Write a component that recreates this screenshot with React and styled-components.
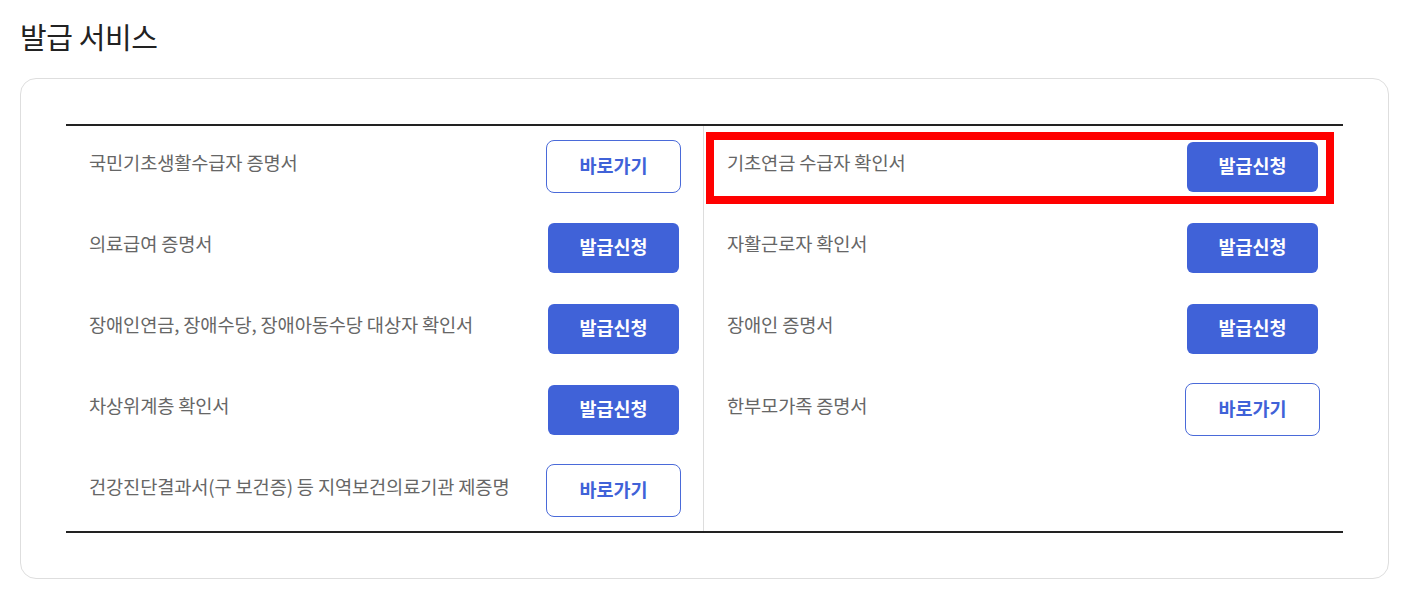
import React from "react";
import styled, { createGlobalStyle } from "styled-components";

const GlobalStyle = createGlobalStyle`
  html, body {
    margin: 0;
    padding: 0;
    background: #fff;
    font-family: "Noto Sans CJK KR", "Noto Sans", sans-serif;
  }
`;

const Page = styled.div`
  padding: 14px 19px 20px 20px;
  width: 1369px;
`;

const Title = styled.h2`
  margin: 0 0 20px;
  font-size: 29px;
  font-weight: 400;
  line-height: 44px;
  color: #222;
  letter-spacing: -0.4px;
`;

const Card = styled.div`
  border: 1px solid #dedede;
  border-radius: 16px;
  padding: 45px;
  height: 409px;
`;

const Table = styled.div`
  position: relative;
  display: grid;
  grid-template-columns: 637px 1fr;
  border-top: 2px solid #222;
  border-bottom: 2px solid #222;
`;

const Column = styled.div`
  display: flex;
  flex-direction: column;
  border-left: ${(p) => (p.$divider ? "1px solid #ddd" : "none")};
  padding: ${(p) => (p.$divider ? "0 23px" : "0 22px 0 23px")};
`;

const Row = styled.div`
  height: 81px;
  display: flex;
  align-items: center;
  justify-content: space-between;
`;

const Label = styled.span`
  font-size: 18.7px;
  color: #666;
  letter-spacing: -0.15px;
  padding-bottom: 10px;
`;

const Button = styled.button`
  font-family: inherit;
  font-size: 18.5px;
  font-weight: 700;
  cursor: pointer;
  box-sizing: border-box;
  padding: 0 0 4px;
  ${(p) =>
    p.$outline
      ? `
    width: 135px;
    height: 53px;
    background: #fff;
    color: #4062d8;
    border: 1px solid #4a6ad9;
    border-radius: 8px;
  `
      : `
    width: 131px;
    height: 50px;
    margin-right: 2px;
    background: #4062d8;
    color: #fff;
    border: none;
    border-radius: 6px;
  `}
`;

const Highlight = styled.div`
  position: absolute;
  left: 640px;
  top: 6px;
  width: 628px;
  height: 72px;
  box-sizing: border-box;
  border: 8px solid #ff0000;
  pointer-events: none;
`;

const left = [
  { name: "국민기초생활수급자 증명서", link: true },
  { name: "의료급여 증명서" },
  { name: "장애인연금, 장애수당, 장애아동수당 대상자 확인서" },
  { name: "차상위계층 확인서" },
  { name: "건강진단결과서(구 보건증) 등 지역보건의료기관 제증명", link: true },
];

const right = [
  { name: "기초연금 수급자 확인서" },
  { name: "자활근로자 확인서" },
  { name: "장애인 증명서" },
  { name: "한부모가족 증명서", link: true },
];

const Item = ({ name, link }) => (
  <Row>
    <Label>{name}</Label>
    <Button $outline={link}>{link ? "바로가기" : "발급신청"}</Button>
  </Row>
);

export default function App() {
  return (
    <>
      <GlobalStyle />
      <Page>
        <Title>발급 서비스</Title>
        <Card>
          <Table>
            <Column>
              {left.map((it) => (
                <Item key={it.name} {...it} />
              ))}
            </Column>
            <Column $divider>
              {right.map((it) => (
                <Item key={it.name} {...it} />
              ))}
            </Column>
            <Highlight />
          </Table>
        </Card>
      </Page>
    </>
  );
}
